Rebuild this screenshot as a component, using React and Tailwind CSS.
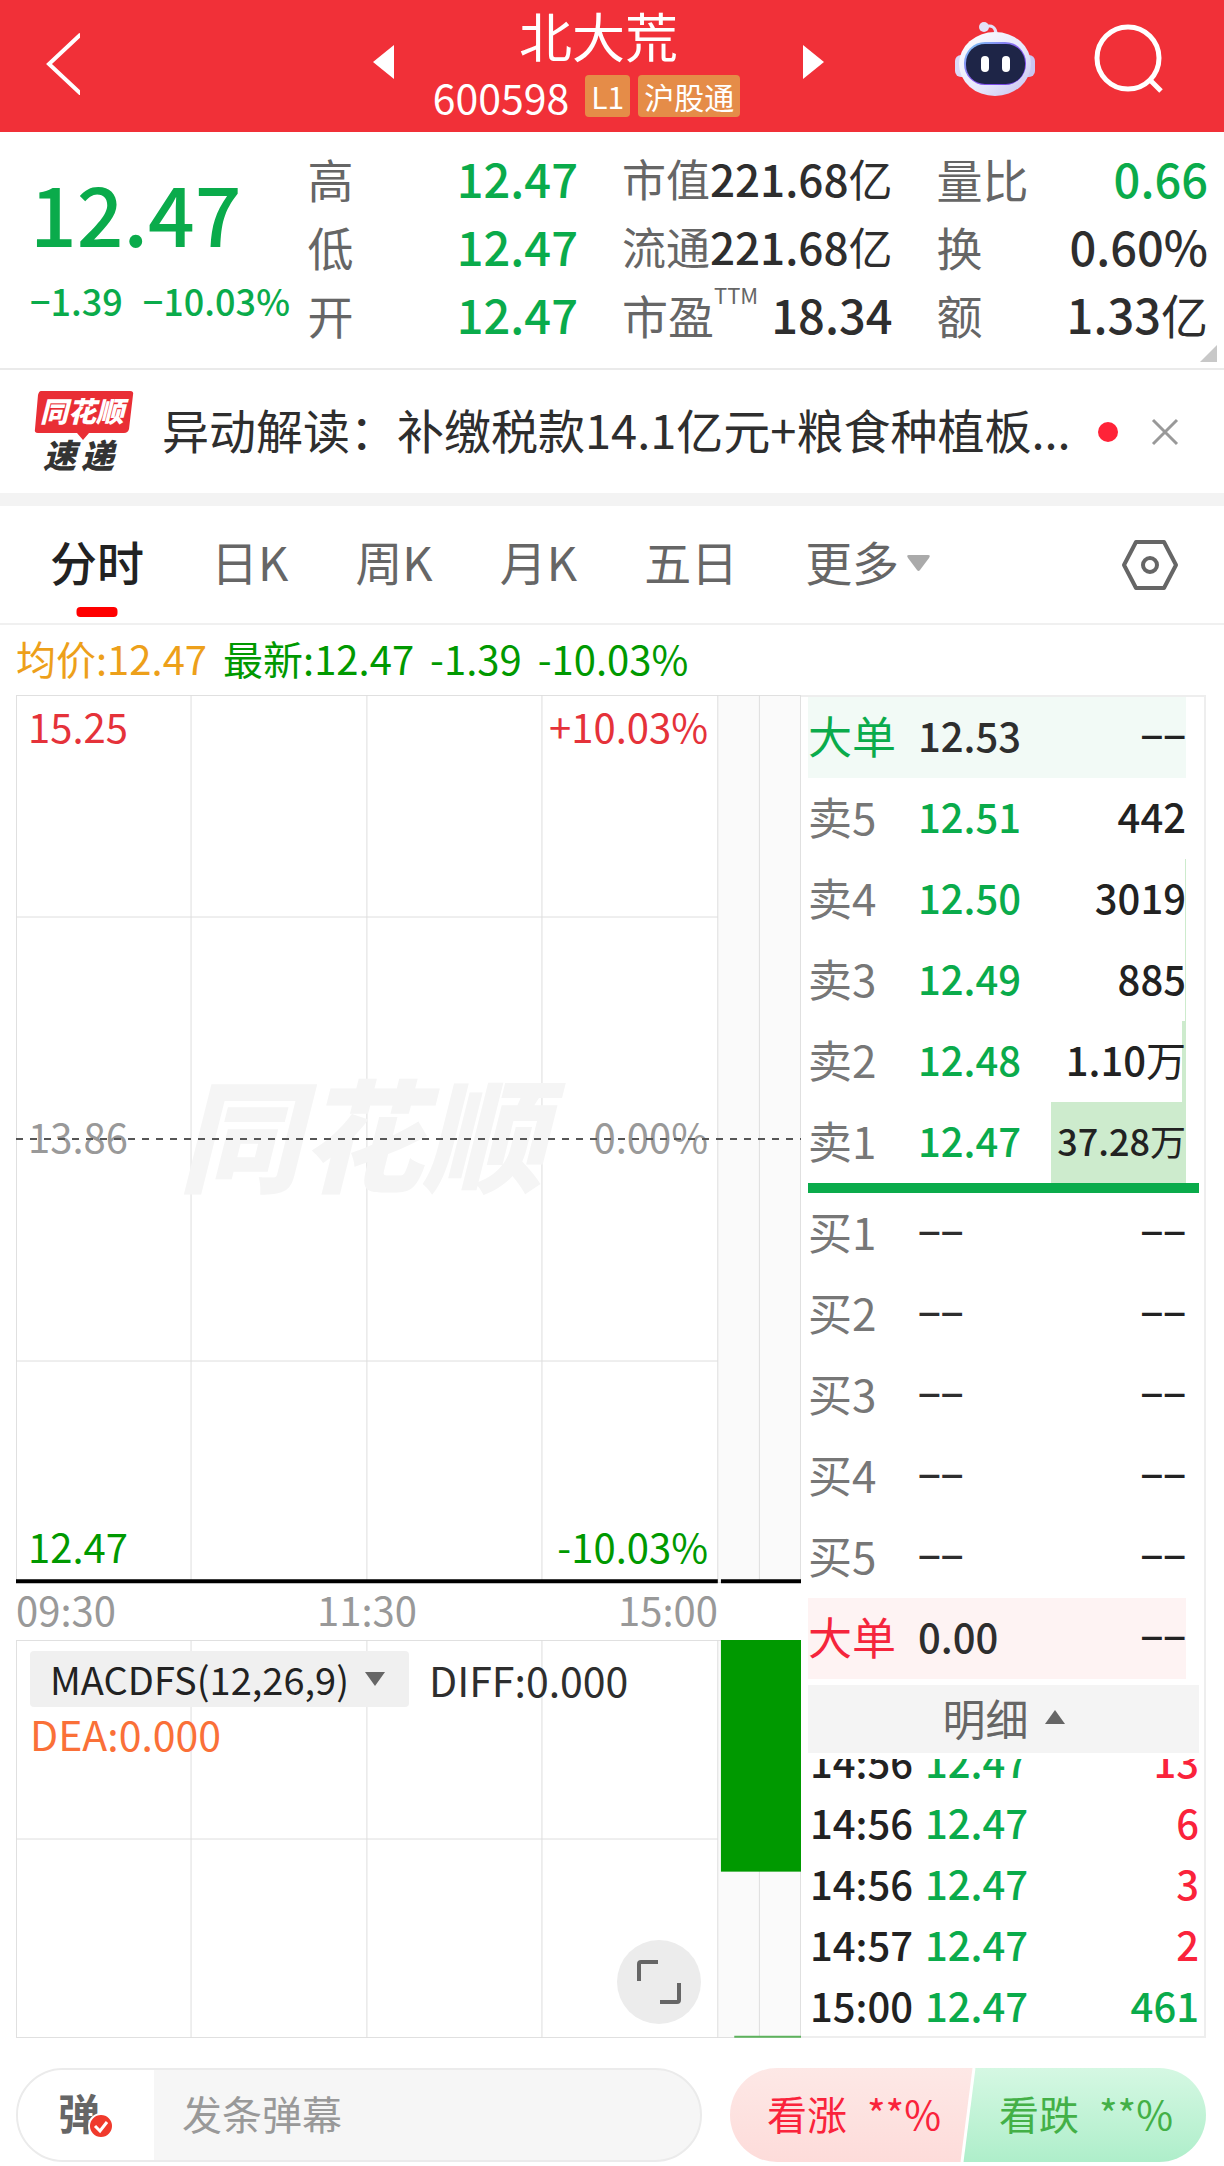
import React from "react";
import clsx from "clsx";

const STATS = [
  [
    { label: "高", value: "12.47", tone: "down" },
    { label: "低", value: "12.47", tone: "down" },
    { label: "开", value: "12.47", tone: "down" },
  ],
  [
    { label: "市值", value: "221.68", unit: "亿", compact: true },
    { label: "流通", value: "221.68", unit: "亿", compact: true },
    { label: "市盈", sup: "TTM", value: "18.34" },
  ],
  [
    { label: "量比", value: "0.66", tone: "down" },
    { label: "换", value: "0.60%" },
    { label: "额", value: "1.33", unit: "亿" },
  ],
];

const TABS = ["分时", "日K", "周K", "月K", "五日"];

// depth = part of the volume column that is filled, in percent
const ASKS = [
  { label: "卖5", price: "12.51", volume: "442", depth: 0 },
  { label: "卖4", price: "12.50", volume: "3019", depth: 1 },
  { label: "卖3", price: "12.49", volume: "885", depth: 1 },
  { label: "卖2", price: "12.48", volume: "1.10", unit: "万", depth: 3 },
  { label: "卖1", price: "12.47", volume: "37.28", unit: "万", depth: 100 },
];

const BIDS = ["买1", "买2", "买3", "买4", "买5"];

const TRADES = [
  { time: "14:56", price: "12.47", volume: "13", side: "buy" },
  { time: "14:56", price: "12.47", volume: "6", side: "buy" },
  { time: "14:56", price: "12.47", volume: "3", side: "buy" },
  { time: "14:57", price: "12.47", volume: "2", side: "buy" },
  { time: "15:00", price: "12.47", volume: "461", side: "sell" },
];

// Session columns, then the after-hours strip
const GRID_X = ["22.3%", "44.7%", "67%", "89.4%", "94.7%"];

function RobotIcon() {
  return (
    <svg viewBox="0 0 82 76" className="w-[82px] h-[76px]" aria-hidden="true">
      <defs>
        <linearGradient id="shell" x1="0" y1="0" x2="1" y2="1">
          <stop offset="0" stopColor="#ffffff" />
          <stop offset="0.6" stopColor="#e6e6fb" />
          <stop offset="1" stopColor="#c3bff0" />
        </linearGradient>
        <linearGradient id="rim" x1="0" y1="0" x2="1" y2="1">
          <stop offset="0" stopColor="#7fd4f5" />
          <stop offset="0.5" stopColor="#8a5cf0" />
          <stop offset="1" stopColor="#6a3be0" />
        </linearGradient>
      </defs>
      <path d="M31 6 C38 3 42 7 42 13" fill="none" stroke="#e3e1f8" strokeWidth="3" />
      <circle cx="30" cy="6" r="5" fill="#e3e1f8" />
      <rect x="1" y="34" width="14" height="22" rx="6" fill="#dcd9f7" />
      <rect x="67" y="34" width="14" height="22" rx="6" fill="#c9c5f2" />
      <ellipse cx="41" cy="43" rx="36" ry="32" fill="url(#shell)" />
      <rect x="10" y="21" width="62" height="43" rx="21" fill="url(#rim)" />
      <rect x="12" y="23" width="59" height="40" rx="19" fill="#1e2547" />
      <rect x="27" y="35" width="8" height="16" rx="4" fill="#fff" />
      <rect x="48" y="35" width="8" height="16" rx="4" fill="#fff" />
    </svg>
  );
}

function Header() {
  return (
    <header className="grid grid-cols-[373fr_451fr_400fr] items-center h-[132px] bg-[#f13038] text-white">
      <div className="flex pl-10 pb-1">
        <button type="button" aria-label="返回">
          <svg viewBox="0 0 40 66" className="w-10 h-[66px]" fill="none" stroke="#fff" strokeWidth="4">
            <path d="M40 4 L9 33 L40 62" strokeLinecap="round" />
          </svg>
        </button>
      </div>

      <div className="flex items-center justify-between h-full pb-2">
        <button type="button" aria-label="上一只">
          <svg viewBox="0 0 21 34" className="w-[21px] h-[34px]" fill="#fff">
            <path d="M21 0 V34 L0 17 Z" />
          </svg>
        </button>
        <div className="flex flex-col items-center">
          <h1 className="mb-1 text-[53px] leading-[64px] font-normal">北大荒</h1>
          <div className="flex items-center gap-2 pr-6 text-[41px] leading-[50px]">
            <span className="mr-2">600598</span>
            <span className="rounded-sm bg-[#e58c48] px-1.5 text-[30px] leading-[42px]">L1</span>
            <span className="rounded-sm bg-[#e58c48] px-1.5 text-[30px] leading-[42px]">沪股通</span>
          </div>
        </div>
        <button type="button" aria-label="下一只">
          <svg viewBox="0 0 21 34" className="w-[21px] h-[34px]" fill="#fff">
            <path d="M0 0 V34 L21 17 Z" />
          </svg>
        </button>
      </div>

      <div className="flex items-center justify-end gap-[58px] pr-[58px] pb-3.5">
        <button type="button" aria-label="智能助手">
          <RobotIcon />
        </button>
        <button type="button" aria-label="搜索">
          <svg viewBox="0 0 72 70" className="w-[72px] h-[70px]" fill="none" stroke="#fff" strokeWidth="5">
            <circle cx="34" cy="34" r="31" />
            <path d="M56 56 L67 67" />
          </svg>
        </button>
      </div>
    </header>
  );
}

function Stat({ label, sup, value, unit, tone, compact }) {
  return (
    <div className="flex items-center justify-between h-[68px] whitespace-nowrap">
      <dt className={clsx("flex text-[#666]", compact ? "text-[44px]" : "text-[46px]")}>
        {label}
        {sup && <span className="-mt-1 text-[22px] leading-[36px]">{sup}</span>}
      </dt>
      <dd
        className={clsx(
          "font-medium",
          compact ? "text-[44px]" : "text-[47px]",
          tone === "down" ? "text-[#0aab4b]" : "text-[#2e2e2e]"
        )}
      >
        {value}
        {unit && <span className="font-normal">{unit}</span>}
      </dd>
    </div>
  );
}

function Quote() {
  return (
    <section className="relative grid grid-cols-[308fr_315fr_313fr_288fr] h-[238px] border-b-2 border-[#eaeaea] leading-[68px]">
      <div className="pl-[30px] pt-[30px] font-medium text-[#0aab4b] whitespace-nowrap">
        <p className="text-[82px] leading-[100px]">12.47</p>
        <p className="mt-4 flex gap-5 text-[36px] leading-[44px]">
          <span>−1.39</span>
          <span>−10.03%</span>
        </p>
      </div>
      <dl className="pt-3 pr-11">
        {STATS[0].map((s) => <Stat key={s.label} {...s} />)}
      </dl>
      <dl className="pt-3 pr-11">
        {STATS[1].map((s) => <Stat key={s.label} {...s} />)}
      </dl>
      <dl className="pt-3 pr-4">
        {STATS[2].map((s) => <Stat key={s.label} {...s} />)}
      </dl>
      <svg viewBox="0 0 17 17" className="absolute right-[7px] bottom-1.5 w-[17px] h-[17px]" fill="#c8c8c8">
        <path d="M17 0 V17 H0 Z" />
      </svg>
    </section>
  );
}

function NewsLogo() {
  return (
    <svg viewBox="0 0 100 90" className="w-[100px] h-[90px] shrink-0" aria-hidden="true">
      <path d="M7 4 H96 Q100 4 99 8 L95 42 Q94 46 90 46 H55 L49 53 L43 46 H4 Q0 46 1 42 L4 8 Q5 4 7 4 Z" fill="#e92e35" />
      <text x="48" y="35" textAnchor="middle" fill="#fff" className="text-[28px] font-black italic">同花顺</text>
      <text x="9" y="81" fill="#333" className="text-[33px] font-black italic">速</text>
      <text x="47" y="81" fill="#333" className="text-[33px] font-black italic">递</text>
    </svg>
  );
}

function News() {
  return (
    <section className="flex items-center h-[136px] border-b-[13px] border-[#f3f3f3] pl-[34px] pr-[44px]">
      <NewsLogo />
      <a href="#news" className="ml-7 flex-1 pb-1.5 text-[47px] leading-[70px] whitespace-nowrap text-[#2e2e2e]">
        异动解读：补缴税款14.1亿元+粮食种植板...
      </a>
      <span className="w-5 h-5 rounded-full bg-[#ff2338]" />
      <button type="button" aria-label="关闭" className="ml-8">
        <svg viewBox="0 0 30 30" className="w-[30px] h-[30px]" stroke="#999" strokeWidth="3">
          <path d="M3 3 L27 27 M27 3 L3 27" />
        </svg>
      </button>
    </section>
  );
}

function Tabs() {
  return (
    <nav className="flex items-start gap-[67px] h-[119px] border-b-2 border-[#f0f0f0] pl-[50px] pr-[45px] text-[47px] leading-[110px] text-[#666]">
      {TABS.map((tab, idx) => (
        <button
          key={tab}
          type="button"
          className={clsx("relative", idx === 0 && "font-medium text-[#222]")}
        >
          {tab}
          {idx === 0 && (
            <span className="absolute -bottom-px left-1/2 -translate-x-1/2 w-[41px] h-2.5 rounded bg-[#ff0000]" />
          )}
        </button>
      ))}
      <button type="button" className="flex items-center gap-2">
        更多
        <svg viewBox="0 0 23 17" className="mt-1 w-[23px] h-[17px]" fill="#aaa">
          <path d="M2 0 H21 Q24 0 22 3 L13 15 Q11.5 17 10 15 L1 3 Q-1 0 2 0 Z" />
        </svg>
      </button>
      <button type="button" aria-label="设置" className="ml-auto self-center">
        <svg viewBox="0 0 58 52" className="w-[58px] h-[52px]" fill="none" stroke="#666" strokeWidth="4">
          <path d="M15 3 H43 L55 26 L43 49 H15 L3 26 Z" strokeLinejoin="round" />
          <circle cx="29" cy="26" r="7" />
        </svg>
      </button>
    </nav>
  );
}

function GridLines() {
  return (
    <>
      <rect x="89.4%" y="0" width="10.6%" height="100%" fill="#fafafa" />
      <rect x="0" y="0" width="100%" height="100%" fill="none" stroke="#e0e0e0" strokeWidth="2" />
      {GRID_X.map((x) => (
        <line key={x} x1={x} x2={x} y1="0" y2="100%" stroke="#dedede" />
      ))}
    </>
  );
}

function PriceChart() {
  return (
    <div className="relative h-[888px]">
      <svg className="absolute inset-0 w-full h-full">
        <GridLines />
        <line x1="0" x2="89.4%" y1="25%" y2="25%" stroke="#dedede" />
        <line x1="0" x2="89.4%" y1="75%" y2="75%" stroke="#dedede" />
        <text x="44%" y="55%" textAnchor="middle" fill="#f5f5f5" className="text-[122px] font-black italic">
          同花顺
        </text>
      </svg>
      <div className="relative flex flex-col justify-between h-full pl-3 pr-[93px] pt-1.5 pb-3 text-[40px] leading-[50px]">
        <p className="flex justify-between text-[#e5323a]">
          <span>15.25</span>
          <span>+10.03%</span>
        </p>
        <p className="flex justify-between text-[#999]">
          <span>13.86</span>
          <span>0.00%</span>
        </p>
        <p className="flex justify-between text-[#009900]">
          <span>12.47</span>
          <span>-10.03%</span>
        </p>
      </div>
      <svg className="absolute inset-0 w-full h-full overflow-visible">
        <line x1="0" x2="100%" y1="50%" y2="50%" stroke="#555" strokeWidth="2" strokeDasharray="7 7" />
        <line x1="0" x2="89.4%" y1="99.8%" y2="99.8%" stroke="#000" strokeWidth="4" />
        <line x1="89.8%" x2="100%" y1="99.8%" y2="99.8%" stroke="#000" strokeWidth="4" />
      </svg>
    </div>
  );
}

function MacdChart() {
  return (
    <div className="relative h-[398px] text-[41px]">
      <svg className="absolute inset-0 w-full h-full">
        <GridLines />
        <line x1="0" x2="89.4%" y1="50%" y2="50%" stroke="#dedede" />
        <rect x="89.8%" y="0" width="10.2%" height="58.2%" fill="#009900" />
        <line x1="91.5%" x2="100%" y1="99.7%" y2="99.7%" stroke="#5cb25c" strokeWidth="2" />
      </svg>
      <div className="relative flex flex-wrap items-center pl-3.5 pt-2.5">
        <button type="button" className="flex items-center gap-4 rounded-sm bg-[#f0f0f0] pl-5 pr-6 text-[38px] leading-[56px] text-[#222]">
          MACDFS(12,26,9)
          <svg viewBox="0 0 20 14" className="w-5 h-3.5" fill="#666">
            <path d="M0 0 H20 L10 14 Z" />
          </svg>
        </button>
        <span className="ml-5 leading-[58px] text-[#2e2e2e]">DIFF:0.000</span>
        <span className="w-full leading-[50px] text-[#fa7038]">DEA:0.000</span>
      </div>
      <button
        type="button"
        aria-label="全屏"
        className="absolute right-[100px] bottom-3.5 grid place-items-center w-[84px] h-[84px] rounded-full bg-[#ececec]"
      >
        <svg viewBox="0 0 44 44" className="w-11 h-11" fill="none" stroke="#666" strokeWidth="4">
          <path d="M2 21 V4 Q2 2 4 2 H21 M42 23 V40 Q42 42 40 42 H23" />
        </svg>
      </button>
    </div>
  );
}

function Blank() {
  return <>−−</>;
}

function BookRow({ label, labelClass, price, priceClass, volume, unit, depth = 0, rowClass }) {
  return (
    <tr className={clsx("h-[81px]", rowClass)}>
      <th scope="row" className={clsx("w-[110px] pb-1.5 text-left text-[44px] font-normal", labelClass)}>
        {label}
      </th>
      <td className={clsx("pb-1.5 text-[40px] font-medium", priceClass)}>{price}</td>
      <td
        className={clsx(
          "relative w-[135px] pb-1.5 text-right text-[#222] font-medium",
          depth === 100 ? "text-[36px]" : "text-[40px]"
        )}
      >
        <span className="absolute inset-y-0 right-0 bg-[#cdebcd]" style={{ width: `${depth}%` }} />
        <span className="relative">
          {volume}
          {unit && <span className="font-normal">{unit}</span>}
        </span>
      </td>
    </tr>
  );
}

function OrderBook() {
  return (
    <aside className="flex flex-col border-y-2 border-r-2 border-[#eee] pl-[7px] pr-[5px] whitespace-nowrap">
      <table className="w-full max-w-[378px] table-fixed leading-[60px]">
        <tbody>
          <BookRow
            label="大单"
            labelClass="text-[#0aab4b]"
            price="12.53"
            priceClass="text-[#2e2e2e]"
            volume={<Blank />}
            rowClass="bg-[#f2faf6]"
          />
          {ASKS.map((row) => (
            <BookRow key={row.label} {...row} labelClass="text-[#777]" priceClass="text-[#0aab4b]" />
          ))}
        </tbody>
      </table>
      <div className="h-2.5 bg-[#0aab4b]" />
      <table className="w-full max-w-[378px] table-fixed leading-[60px]">
        <tbody>
          {BIDS.map((label) => (
            <BookRow
              key={label}
              label={label}
              labelClass="text-[#777]"
              price={<Blank />}
              priceClass="text-[#2e2e2e]"
              volume={<Blank />}
            />
          ))}
          <BookRow
            label="大单"
            labelClass="text-[#f5253c]"
            price="0.00"
            priceClass="text-[#2e2e2e]"
            volume={<Blank />}
            rowClass="bg-[#fef3f3]"
          />
        </tbody>
      </table>
      <button type="button" className="mt-1.5 flex items-center justify-center gap-4 h-[68px] bg-[#f4f4f4] pb-1 text-[43px] text-[#666]">
        明细
        <svg viewBox="0 0 20 14" className="w-5 h-3.5" fill="#666">
          <path d="M0 14 H20 L10 0 Z" />
        </svg>
      </button>
      <div className="mt-1.5 flex flex-col justify-end flex-[1_1_0px] min-h-0 overflow-hidden">
        <table className="w-full table-fixed text-[40px] leading-[61px] font-medium">
          <tbody>
            {TRADES.map((t, idx) => (
              <tr key={idx}>
                <td className="w-[117px] pl-0.5 text-[#222]">{t.time}</td>
                <td className="text-[#0aab4b]">{t.price}</td>
                <td className={clsx("text-right", t.side === "buy" ? "text-[#fa233b]" : "text-[#0aab4b]")}>
                  {t.volume}
                </td>
              </tr>
            ))}
          </tbody>
        </table>
      </div>
    </aside>
  );
}

function BottomBar() {
  return (
    <footer className="grid grid-cols-[686fr_476fr] gap-7 pl-4 pr-[18px] pt-[30px] pb-1 text-[40px]">
      <div className="flex h-[94px] rounded-full border-2 border-[#ebebeb] bg-[#f6f6f6] overflow-hidden">
        <button type="button" aria-label="弹幕开关" className="relative w-[136px] pr-3.5 pb-2 bg-white text-[42px] font-bold text-[#666]">
          弹
          <svg viewBox="0 0 26 26" className="absolute left-[70px] top-[43px] w-[26px] h-[26px]">
            <circle cx="13" cy="13" r="12" fill="#f03a2c" stroke="#fff" strokeWidth="2" />
            <path d="M7 13 L12 18 L19 9" fill="none" stroke="#fff" strokeWidth="3" />
          </svg>
        </button>
        <input
          type="text"
          aria-label="发条弹幕"
          placeholder="发条弹幕"
          className="flex-1 min-w-0 pl-7 pb-1 bg-transparent outline-none placeholder:text-[#999]"
        />
      </div>
      <div className="relative flex h-[94px] rounded-full overflow-hidden">
        <button type="button" className="flex-1 flex items-center justify-center gap-5 pl-2 pb-1 bg-linear-to-b from-[#fde8e6] to-[#fddcda] text-[#fa233b]">
          <span>看涨</span>
          <span>**%</span>
        </button>
        <button type="button" className="flex-1 flex items-center justify-center gap-5 pr-1 pb-1 bg-linear-to-b from-[#d5f8e3] to-[#aeeeca] text-[#43b047]">
          <span>看跌</span>
          <span>**%</span>
        </button>
        <svg viewBox="0 0 16 94" className="absolute left-1/2 -translate-x-1/2 w-4 h-full">
          <defs>
            <linearGradient id="rise" x1="0" y1="0" x2="0" y2="1">
              <stop offset="0" stopColor="#fde8e6" />
              <stop offset="1" stopColor="#fddcda" />
            </linearGradient>
            <linearGradient id="fall" x1="0" y1="0" x2="0" y2="1">
              <stop offset="0" stopColor="#d5f8e3" />
              <stop offset="1" stopColor="#aeeeca" />
            </linearGradient>
          </defs>
          <path d="M0 0 H14 L2 94 H0 Z" fill="url(#rise)" />
          <path d="M14 0 H16 V94 H2 Z" fill="url(#fall)" />
          <path d="M14 0 L2 94" stroke="#fff" strokeWidth="3" />
        </svg>
      </div>
    </footer>
  );
}

export default function App() {
  return (
    <div className="min-h-screen bg-white font-['Noto_Sans_CJK_SC',sans-serif]">
      <Header />
      <Quote />
      <News />
      <Tabs />
      <p className="flex gap-4 pl-4 pt-1.5 pb-2.5 text-[40px] leading-[54px] text-[#009900]">
        <span className="text-[#eda01a]">均价:12.47</span>
        <span>最新:12.47</span>
        <span>-1.39</span>
        <span>-10.03%</span>
      </p>
      <main className="grid grid-cols-[785fr_405fr] pl-4 pr-[18px]">
        <div>
          <PriceChart />
          <p className="flex justify-between pr-[83px] pb-1 text-[40px] leading-[53px] text-[#999]">
            <span>09:30</span>
            <span>11:30</span>
            <span>15:00</span>
          </p>
          <MacdChart />
        </div>
        <OrderBook />
      </main>
      <BottomBar />
    </div>
  );
}
